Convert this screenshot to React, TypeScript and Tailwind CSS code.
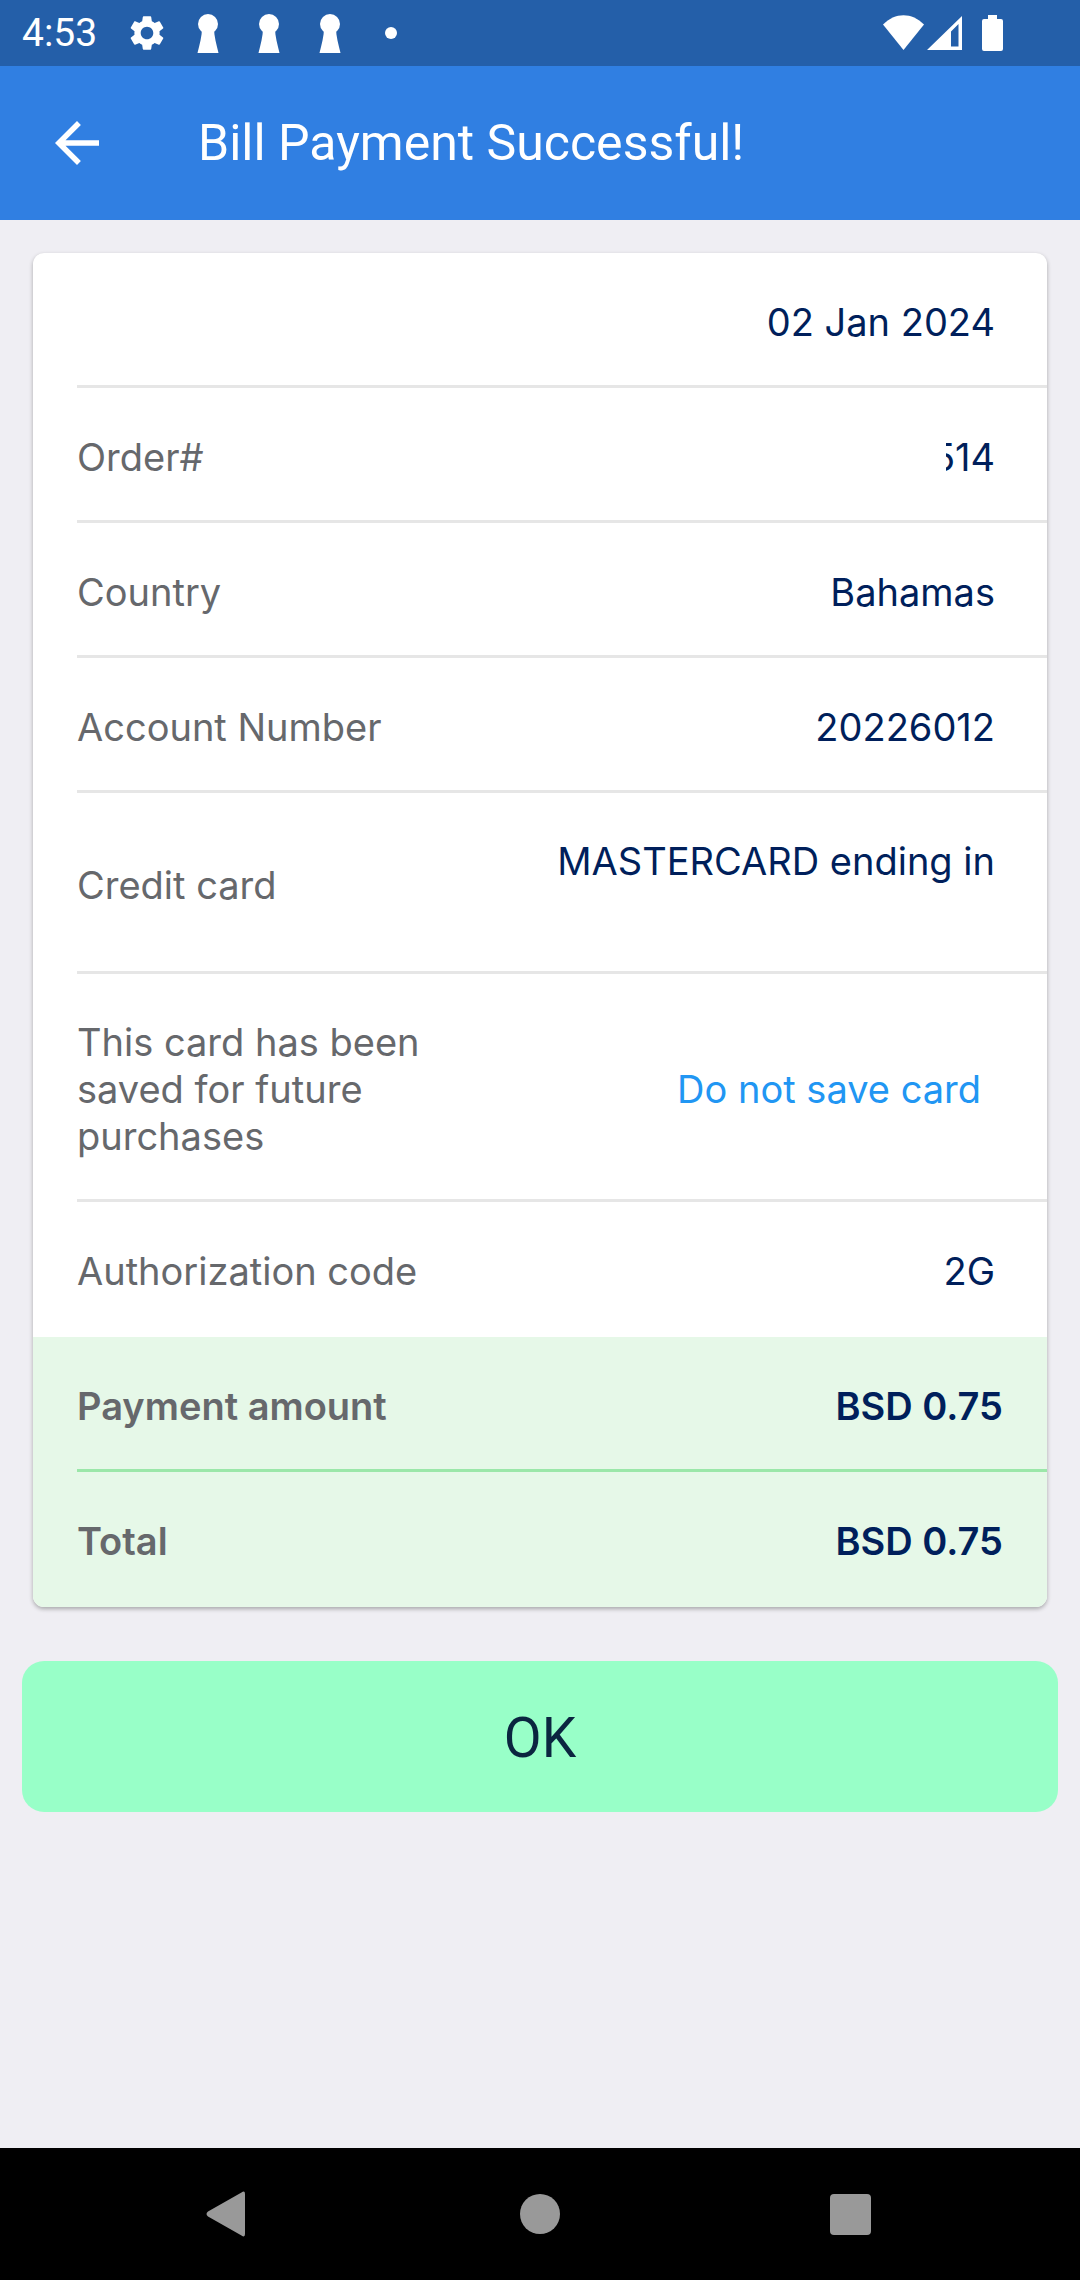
import type { ReactNode } from "react";
import { MdArrowBack, MdSettings } from "react-icons/md";

type ReceiptRow = {
  label: string;
  value: ReactNode;
};

const details: ReceiptRow[] = [
  { label: "", value: "02 Jan 2024" },
  {
    label: "Order#",
    value: <span className="flex w-[49px] justify-end overflow-hidden">514</span>,
  },
  { label: "Country", value: "Bahamas" },
  { label: "Account Number", value: "20226012" },
  {
    label: "Credit card",
    value: (
      <>
        MASTERCARD ending in
        <br />
        &nbsp;
      </>
    ),
  },
  {
    label: "This card has been saved for future purchases",
    value: (
      <button type="button" className="px-3.5 text-[#2196f3]">
        Do not save card
      </button>
    ),
  },
  { label: "Authorization code", value: "2G" },
];

const totals: ReceiptRow[] = [
  { label: "Payment amount", value: "BSD 0.75" },
  { label: "Total", value: "BSD 0.75" },
];

function KeyholeIcon() {
  return (
    <svg viewBox="0 0 42 42" className="size-[42px] fill-white" aria-hidden="true">
      <circle cx="21" cy="12" r="10" />
      <path d="M15 16h12c0 8 2.500 17 4.500 25H10.500c2-8 4.500-17 4.500-25z" />
    </svg>
  );
}

function StatusBar() {
  return (
    <div className="flex h-[66px] items-center justify-between bg-[#245fa9] pr-[77px] pl-[22px] font-[Roboto,sans-serif] text-white">
      <div className="flex items-center gap-[19px]">
        <span className="mr-[10px] text-[39px] leading-[44px]">4:53</span>
        <MdSettings className="size-[42px]" aria-hidden="true" />
        <KeyholeIcon />
        <KeyholeIcon />
        <KeyholeIcon />
        <span className="flex size-[42px] items-center justify-center">
          <span className="size-3 rounded-full bg-white" />
        </span>
      </div>
      <div className="flex items-center">
        <svg viewBox="0 0 41 36" className="mr-[3px] h-[36px] w-[41px] fill-white" aria-hidden="true">
          <path d="M0 9.500C12-3 29-3 41 9.500L20.500 35z" />
        </svg>
        <svg viewBox="0 0 35 36" className="mr-5 h-[36px] w-[35px] fill-white" aria-hidden="true">
          <path fillRule="evenodd" d="M35 1v34H0zM31.500 9L24 16.500v15h7.500z" />
        </svg>
        <svg viewBox="0 0 21 36" className="h-[36px] w-[21px] fill-white" aria-hidden="true">
          <path d="M6 0h9v4h4q2 0 2 2v28q0 2-2 2H2q-2 0-2-2V6q0-2 2-2h4z" />
        </svg>
      </div>
    </div>
  );
}

function Row({ label, value, total }: ReceiptRow & { total?: boolean }) {
  return (
    <div
      className={
        total
          ? "ml-11 flex min-h-[135px] items-center justify-between border-b-[3px] border-[#9be7a9] pt-[45px] pb-[39px] pr-[44px] font-semibold last:border-transparent"
          : "ml-11 flex min-h-[135px] items-center justify-between border-b-[3px] border-[#e6e6e6] pt-[45px] pb-[39px] pr-[52px] last:border-transparent"
      }
    >
      <dt className="max-w-[400px] text-[#66686c]">{label}</dt>
      <dd className="text-right text-[#001f5b]">{value}</dd>
    </div>
  );
}

export default function App() {
  return (
    <div className="flex min-h-screen flex-col bg-[#efeef3] font-[Inter,sans-serif]">
      <StatusBar />
      <header className="flex h-[154px] items-center bg-[#307fe2] px-11 font-[Roboto,sans-serif] text-white">
        <button type="button" aria-label="Back">
          <MdArrowBack className="size-[66px]" />
        </button>
        <h1 className="ml-[88px] text-[50px] leading-[60px]">Bill Payment Successful!</h1>
      </header>

      <main className="flex-1 px-[22px] pt-[33px]">
        <section className="mx-[11px] overflow-hidden rounded-[11px] bg-white text-[38px] leading-[47px] shadow-[0_2px_4px_rgba(0,0,0,0.3)]">
          <dl>
            {details.map((row) => (
              <Row key={row.label} {...row} />
            ))}
          </dl>
          <dl className="bg-[#e6f8e8]">
            {totals.map((row) => (
              <Row key={row.label} {...row} total />
            ))}
          </dl>
        </section>
        <button
          type="button"
          className="mt-[54px] h-[151px] w-full rounded-[22px] bg-[#98ffc8] pt-1 font-[Roboto,sans-serif] text-[55px] text-[#0b2540]"
        >
          OK
        </button>
      </main>

      <nav className="flex h-[132px] items-center justify-between bg-black px-[18%]">
        <button type="button" aria-label="Back">
          <svg viewBox="0 0 66 66" className="size-[66px] fill-[#999999]">
            <path d="M51 13v40q0 4-3.500 1.500L14 35.500q-3-2.500 0-5L47.500 11.500Q51 9 51 13z" />
          </svg>
        </button>
        <button type="button" aria-label="Home">
          <svg viewBox="0 0 66 66" className="size-[66px] fill-[#999999]">
            <circle cx="33" cy="33" r="20" />
          </svg>
        </button>
        <button type="button" aria-label="Recent apps">
          <svg viewBox="0 0 66 66" className="size-[66px] fill-[#999999]">
            <rect x="10" y="13" width="41" height="41" rx="4" />
          </svg>
        </button>
      </nav>
    </div>
  );
}
